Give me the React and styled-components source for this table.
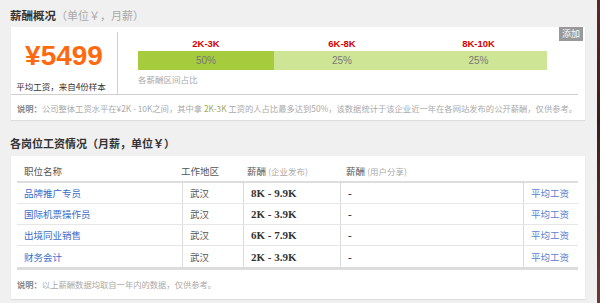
import React from 'react'
import styled, { createGlobalStyle } from 'styled-components'

const GlobalStyle = createGlobalStyle`
  html, body {
    margin: 0;
    padding: 0;
    background: #f0f0f0;
  }
  body {
    font-family: "Noto Sans CJK SC", "Liberation Sans", sans-serif;
    color: #555;
  }
`

const Page = styled.div`
  display: flex;
  width: 600px;
  height: 303px;
  overflow: hidden;
`

const Main = styled.div`
  flex: 1;
  padding: 0 12px 0 11px;
`

const Strip = styled.div`
  width: 3px;
  background: linear-gradient(#5a2a26, #3b1c1c 40%, #6a3a30);
`

const SectionTitle = styled.h2`
  margin: 0;
  height: ${p => p.$h}px;
  padding-top: ${p => p.$top}px;
  box-sizing: border-box;
  font-size: ${p => p.$size}px;
  font-weight: bold;
  color: #333;
  line-height: 14px;
  margin-left: -1px;
`

const Sub = styled.span`
  font-weight: normal;
  color: #aaa;
  font-size: 11px;
`

const Card = styled.div`
  position: relative;
  background: #fff;
  box-shadow: 0 1px 1px rgba(0, 0, 0, 0.08);
  height: ${p => p.$h}px;
  box-sizing: border-box;
`

const Top = styled.div`
  display: flex;
  height: 67px;
  margin-right: 7px;
  border-bottom: 1px solid #cfcfcf;
`

const Average = styled.div`
  width: 106px;
  margin-top: 5px;
  border-right: 1px solid #cfcfcf;
  display: flex;
  flex-direction: column;
  align-items: center;
`

const Money = styled.div`
  font-family: "Liberation Sans", Arial, sans-serif;
  font-weight: bold;
  font-size: 28px;
  color: #ff6a10;
  line-height: 30px;
  margin-top: 9px;
`

const Caption = styled.div`
  font-size: 8.5px;
  color: #333;
  margin-top: 9px;
  margin-left: -6px;
`

const Chart = styled.div`
  padding: 10px 0 0 20px;
`

const Segments = styled.div`
  display: flex;
`

const Segment = styled.div`
  width: ${p => p.$w}px;
  display: flex;
  flex-direction: column;
  align-items: center;
`

const Range = styled.div`
  font-family: "Liberation Sans", Arial, sans-serif;
  font-weight: bold;
  font-size: 9.5px;
  color: #d40000;
  height: 14px;
  line-height: 14px;
`

const Bar = styled.div`
  width: 100%;
  height: 19px;
  background: ${p => (p.$top ? '#a6cb3c' : '#cfe596')};
  font-family: "Liberation Sans", Arial, sans-serif;
  font-size: 10px;
  color: #777;
  line-height: 19px;
  text-align: center;
`

const ChartCaption = styled.div`
  font-size: 8.5px;
  color: #aaa;
  margin-top: 3px;
`

const Add = styled.div`
  position: absolute;
  top: 0;
  right: 2px;
  background: #999;
  color: #fff;
  font-size: 9px;
  padding: 0 3px;
  height: 14px;
  line-height: 14px;
`

const Note = styled.div`
  font-size: 8.3px;
  color: #aaa;
  padding: ${p => p.$pad};
  white-space: nowrap;
`

const NoteHead = styled.b`
  color: #888;
`

const Hi = styled.span`
  color: #a0a85a;
`

const Table = styled.div`
  margin: 0 7px 0 6px;
`

const Row = styled.div`
  display: grid;
  grid-template-columns: ${p => p.$cols};
  height: ${p => p.$h}px;
  box-sizing: border-box;
  border-bottom: ${p => p.$border};
  align-items: stretch;
`

const HeadCell = styled.div`
  padding: 8px 0 0 7px;
  font-size: 9.5px;
  color: #555;
`

const Light = styled.span`
  color: #aaa;
  font-size: 8.5px;
`

const Cell = styled.div`
  padding-left: 7px;
  display: flex;
  align-items: center;
  font-size: 9.5px;
  color: #555;
  border-left: ${p => (p.$first ? 'none' : '1px solid #dcdcdc')};
`

const Link = styled.a`
  color: ${p => (p.$light ? '#5b82d0' : '#3a6cc8')};
  text-decoration: none;
`

const Salary = styled.span`
  font-family: "Liberation Serif", "Times New Roman", serif;
  font-weight: bold;
  font-size: 11px;
  color: #333;
`

const ranges = [
  { label: '2K-3K', pct: '50%', top: true },
  { label: '6K-8K', pct: '25%' },
  { label: '8K-10K', pct: '25%' },
]

const jobs = [
  { name: '品牌推广专员', area: '武汉', pay: '8K - 9.9K' },
  { name: '国际机票操作员', area: '武汉', pay: '2K - 3.9K' },
  { name: '出境同业销售', area: '武汉', pay: '6K - 7.9K' },
  { name: '财务会计', area: '武汉', pay: '2K - 3.9K' },
]

const bodyCols = '165px 61px 97px 183px 1fr'

const App = () => {
  return (
    <Page>
      <GlobalStyle />
      <Main>
        <SectionTitle $h={27} $top={8} $size={11.5}>
          薪酬概况<Sub>（单位￥，月薪）</Sub>
        </SectionTitle>
        <Card $h={93}>
          <Add>添加</Add>
          <Top>
            <Average>
              <Money>¥5499</Money>
              <Caption>平均工资，来自4份样本</Caption>
            </Average>
            <Chart>
              <Segments>
                {ranges.map((r, i) => (
                  <Segment key={i} $w={i === 2 ? 137 : 136}>
                    <Range>{r.label}</Range>
                    <Bar $top={r.top}>{r.pct}</Bar>
                  </Segment>
                ))}
              </Segments>
              <ChartCaption>各薪酬区间占比</ChartCaption>
            </Chart>
          </Top>
          <Note $pad="7px 0 0 6px">
            <NoteHead>说明：</NoteHead>公司整体工资水平在¥2K - 10K之间，其中拿 <Hi>2K-3K</Hi> 工资的人占比最多达到50%，该数据统计于该企业近一年在各网站发布的公开薪酬，仅供参考。
          </Note>
        </Card>
        <SectionTitle $h={36} $top={16} $size={11}>
          各岗位工资情况（月薪，单位￥）
        </SectionTitle>
        <Card $h={143}>
          <Table>
            <Row $cols="157px 66px 99px 1fr" $h={27} $border="2px solid #ddd">
              <HeadCell>职位名称</HeadCell>
              <HeadCell>工作地区</HeadCell>
              <HeadCell>薪酬 <Light>(企业发布)</Light></HeadCell>
              <HeadCell>薪酬 <Light>(用户分享)</Light></HeadCell>
            </Row>
            {jobs.map((j, i) => (
              <Row
                key={i}
                $cols={bodyCols}
                $h={i === jobs.length - 1 ? 24 : 21}
                $border={i === jobs.length - 1 ? '3px solid #dcdcdc' : '1px solid #e6e6e6'}
              >
                <Cell $first><Link href="#">{j.name}</Link></Cell>
                <Cell>{j.area}</Cell>
                <Cell><Salary>{j.pay}</Salary></Cell>
                <Cell><Salary>-</Salary></Cell>
                <Cell><Link $light href="#">平均工资</Link></Cell>
              </Row>
            ))}
          </Table>
          <Note $pad="8px 0 0 6px">
            <NoteHead>说明：</NoteHead>以上薪酬数据均取自一年内的数据，仅供参考。
          </Note>
        </Card>
      </Main>
      <Strip />
    </Page>
  )
}

export default App
